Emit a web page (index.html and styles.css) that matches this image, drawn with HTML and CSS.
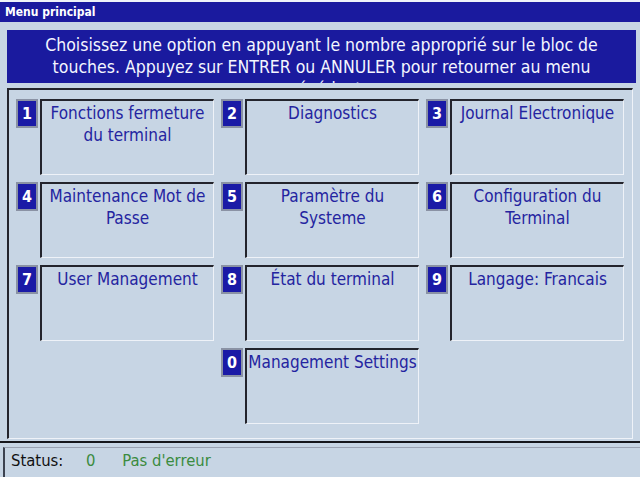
FILE: index.html
```html
<!DOCTYPE html>
<html lang="fr">
<head>
<meta charset="UTF-8">
<meta name="viewport" content="width=device-width, initial-scale=1.0">
<title>Menu principal</title>
<link rel="stylesheet" href="styles.css">
</head>
<body>
<div class="screen">
    <div class="titlebar">Menu principal</div>

    <div class="instructions">
        Choisissez une option en appuyant le nombre approprié sur le bloc de
        touches. Appuyez sur ENTRER ou ANNULER pour retourner au menu
        précédent
    </div>

    <div class="panel">
        <div class="menu">
            <div class="option">
                <span class="key">1</span>
                <div class="label">Fonctions fermeture<br>du terminal</div>
            </div>
            <div class="option">
                <span class="key">2</span>
                <div class="label">Diagnostics</div>
            </div>
            <div class="option">
                <span class="key">3</span>
                <div class="label">Journal Electronique</div>
            </div>

            <div class="option">
                <span class="key">4</span>
                <div class="label">Maintenance Mot de<br>Passe</div>
            </div>
            <div class="option">
                <span class="key">5</span>
                <div class="label">Paramètre du<br>Systeme</div>
            </div>
            <div class="option">
                <span class="key">6</span>
                <div class="label">Configuration du<br>Terminal</div>
            </div>

            <div class="option">
                <span class="key">7</span>
                <div class="label">User Management</div>
            </div>
            <div class="option">
                <span class="key">8</span>
                <div class="label">État du terminal</div>
            </div>
            <div class="option">
                <span class="key">9</span>
                <div class="label">Langage: Francais</div>
            </div>

            <div class="option last">
                <span class="key">0</span>
                <div class="label">Management Settings</div>
            </div>
        </div>
    </div>

    <div class="statusbar">
        <div class="status-box">
            <span class="status-name">Status:</span>
            <span class="status-code">0</span>
            <span class="status-text">Pas d'erreur</span>
        </div>
    </div>
</div>
</body>
</html>
```

FILE: styles.css
```css
:root {
    /* colors */
    --screen: #c7d5e4;
    --navy: #1a1a9e;
    --key: #1a1aa6;
    --ink: #2424a0;
    --dark: #23242c;
    --light: #eef2f8;
    --ok: #3b8b3f;
    /* fonts */
    --Tahoma: "DejaVu Sans Condensed", "DejaVu Sans", sans-serif;
}

body {
    margin: 0;
    background-color: var(--screen);
    font-family: var(--Tahoma);
}

.screen {
    width: 640px;
    height: 477px;
    overflow: hidden;
    display: flex;
    flex-direction: column;
    border-top: 2px solid var(--light);
    box-sizing: border-box;
}

.titlebar {
    height: 20px;
    line-height: 20px;
    padding-left: 5px;
    background-color: var(--navy);
    color: #fff;
    font-size: 12px;
    font-weight: bold;
}

.instructions {
    height: 53px;
    margin: 8px 4px 0 7px;
    padding: 4px 12px 0;
    box-sizing: border-box;
    overflow: hidden;
    background-color: var(--navy);
    color: #f4f6ff;
    text-align: center;
    font-size: 17.5px;
    line-height: 22px;
}

.panel {
    height: 351px;
    margin: 5px 7px 0 7px;
    padding: 9px 0 0 7px;
    box-sizing: border-box;
    border-top: 2px solid var(--dark);
    border-left: 2px solid var(--dark);
    border-right: 1px solid var(--light);
    border-bottom: 1px solid var(--light);
}

.menu {
    display: grid;
    grid-template-columns: repeat(3, 198px);
    grid-auto-rows: 76px;
    column-gap: 7px;
    row-gap: 7px;
}

.option {
    display: flex;
    gap: 2px;
}

.option.last {
    grid-column: 2;
}

.key {
    width: 22px;
    height: 29px;
    box-sizing: border-box;
    border: 2px solid #8a92a4;
    background-color: var(--key);
    color: #fff;
    font-size: 16px;
    font-weight: bold;
    line-height: 25px;
    text-align: center;
}

.label {
    flex: 1;
    padding-top: 1px;
    border-top: 2px solid var(--dark);
    border-left: 2px solid var(--dark);
    border-right: 1px solid var(--light);
    border-bottom: 1px solid var(--light);
    color: var(--ink);
    font-size: 17px;
    line-height: 22px;
    text-align: center;
    white-space: nowrap;
}

.statusbar {
    flex: 1;
    margin-top: 2px;
    padding: 4px 0 0 3px;
    border-top: 2px solid #15161c;
}

.status-box {
    height: 100%;
    padding-left: 6px;
    border-left: 2px solid #3c4250;
    border-top: 1px solid #9aa2b2;
    font-size: 16.5px;
    line-height: 26px;
}

.status-name {
    color: #111;
}

.status-code {
    margin-left: 18px;
    color: var(--ok);
}

.status-text {
    margin-left: 22px;
    color: var(--ok);
}
```
